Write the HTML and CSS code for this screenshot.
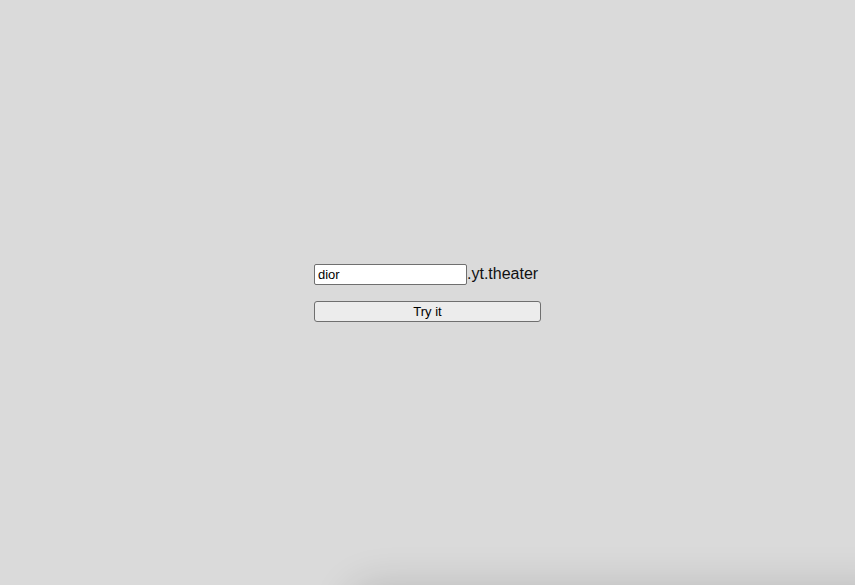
FILE: index.html
```html
<!DOCTYPE html>
<html>
<head>
<meta charset="utf-8">
<link rel="stylesheet" href="styles.css">
</head>
<body>
<main class="stage">
  <div class="form">
    <div class="row">
      <input class="field" type="text" value="dior"><span class="suffix">.yt.theater</span>
    </div>
    <button class="btn" type="button">Try it</button>
  </div>
</main>
<div class="sheet"></div>
</body>
</html>
```
FILE: styles.css
```css
html, body {
  margin: 0;
  padding: 0;
  height: 100%;
  overflow: hidden;
  background: #dadada;
  font-family: "Liberation Sans", Arial, sans-serif;
}
.stage {
  height: 100vh;
  display: flex;
  align-items: center;
  justify-content: center;
}
.form {
  display: flex;
  flex-direction: column;
  gap: 16px;
  width: 227px;
  margin-top: 1px;
}
.row {
  display: flex;
  align-items: center;
}
.field {
  box-sizing: border-box;
  width: 153px;
  height: 21px;
  margin: 0;
  padding: 0 3px;
  border: 1px solid #6f6f6f;
  border-radius: 2px;
  background: #ffffff;
  color: #000;
  font-family: "Liberation Sans", Arial, sans-serif;
  font-size: 13px;
  outline: none;
}
.suffix {
  font-size: 16px;
  color: #111;
  line-height: 18px;
  margin-top: -2px;
}
.btn {
  box-sizing: border-box;
  width: 227px;
  height: 21px;
  margin: 0;
  padding: 0;
  border: 1px solid #6f6f6f;
  border-radius: 3px;
  background: #ececec;
  color: #000;
  font-family: "Liberation Sans", Arial, sans-serif;
  font-size: 13px;
}
.sheet {
  position: fixed;
  left: 360px;
  right: -40px;
  top: 596px;
  height: 200px;
  border-radius: 16px;
  background: #dadada;
  box-shadow: 0 0 40px 12px rgba(0,0,0,0.14);
}
```
